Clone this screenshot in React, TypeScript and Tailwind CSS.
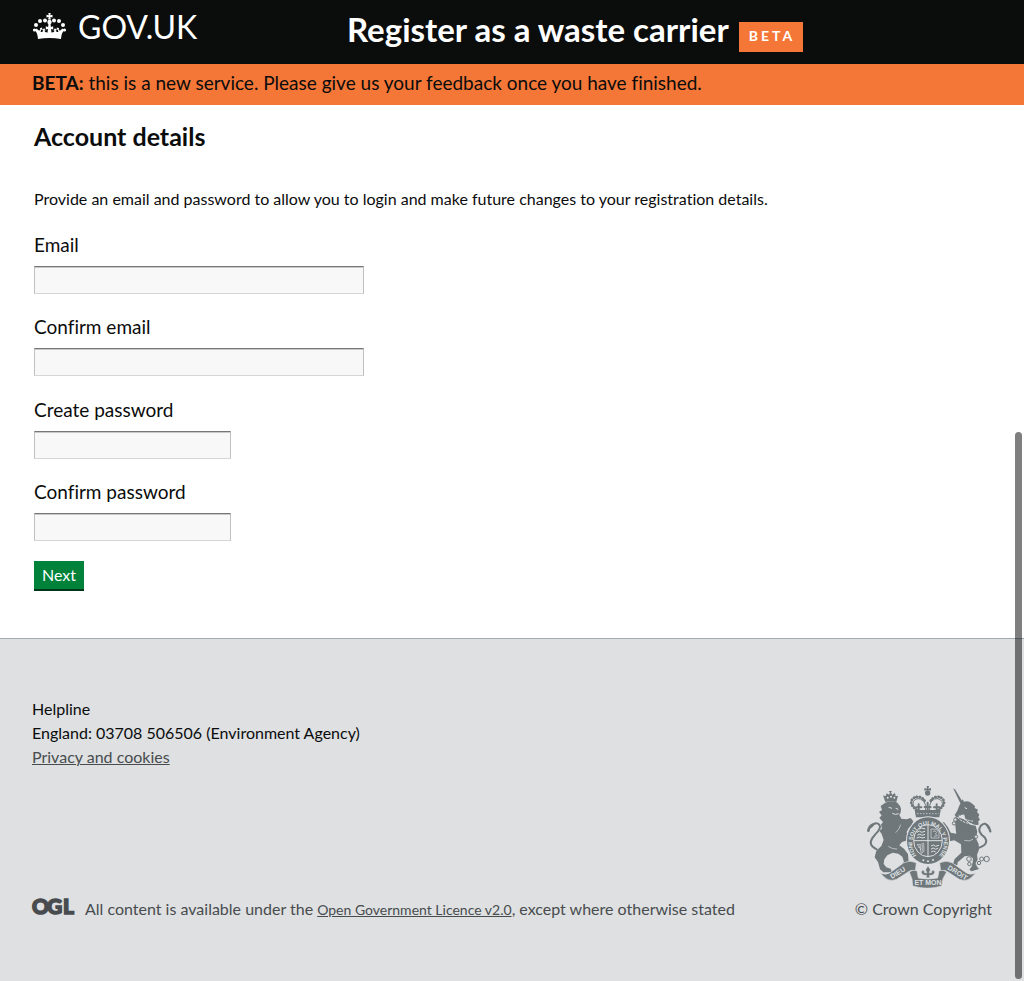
import React from 'react';

function Crown() {
  const pearls = [
    [4, 12, 2], [2.5, 17, 1.6], [8, 8, 2], [13, 7.5, 2],
    [31, 12, 2], [32.5, 17, 1.6], [27, 8, 2], [22, 7.5, 2],
  ];
  return (
    <svg viewBox="0 0 35 26" className="h-[26px] w-[35px] fill-white" aria-hidden="true">
      {pearls.map(([x, y, r]) => (
        <circle key={`${x}-${y}`} cx={x} cy={y} r={r} />
      ))}
      <path d="M16.300 0h2.400l-.5 2.300 2.300-.5v2.600l-2.200-.4.6 2.600h-2.800l.6-2.600-2.200.4V1.800l2.300.5z" />
      <circle cx="17.500" cy="9" r="2.200" />
      <path d="M16.500 10h2l.4 4 2.300-.7v3.200l-2.200-.6.5 3.600c1.800.1 3-.6 3-1.900l-1.200-.2 1.600-2.200 1.900 1.700-1 .6c.3 1.200 1.200 1.700 2.600 1.400l-.6-2.300-1.200.4.3-2.500 2.300.8-.6 1 1.200 1.500 2.700-2.200 1.800 1.300c-2 2-2.900 4.600-3.300 9.100-7.300-1.300-15.700-1.300-23 0C5.600 21.500 4.700 18.900 2.700 16.900l1.800-1.300 2.700 2.200 1.200-1.500-.6-1 2.300-.8.3 2.500-1.200-.4-.6 2.300c1.400.3 2.300-.2 2.600-1.400l-1-.6 1.900-1.700 1.600 2.200-1.200.2c0 1.300 1.200 2 3 1.900l.5-3.600-2.200.6v-3.200l2.300.7z" />
    </svg>
  );
}

function OglMark() {
  return (
    <svg viewBox="0 0 43 26" className="h-[26px] w-[43px] shrink-0 overflow-visible" role="img" aria-label="Open Government Licence">
      <g className="fill-[#484c4e] stroke-[#484c4e] font-['Lato'] text-[21px] font-black" strokeWidth="1.500">
        <text x="0" y="19">O</text>
        <text x="15" y="19">G</text>
        <text x="31" y="19">L</text>
      </g>
    </svg>
  );
}

function Crest() {
  return (
    <svg viewBox="21 18 375 306" className="h-[102px] w-[125px]" role="img" aria-label="Royal coat of arms">
      <defs>
        <path id="garter" d="M170 226A47 54 0 1 1 238 226" />
      </defs>
      <g className="fill-[#6f777b]">
        {/* lion's crown */}
        <path d="M76 66l-7-20 8 3 3-9 7 4 3-6-4-5h10l-3 5 4 6 8-5 2 10 7-2-5 19q-17-5-33 0z" />
        <g className="fill-[#dee0e2]">
          <circle cx="83" cy="53" r="3" /><circle cx="93" cy="50" r="3" /><circle cx="103" cy="53" r="3" />
        </g>
        {/* lion */}
        <path d="M76 68Q95 60 112 68L120 78Q126 88 122 98L118 104 124 116 140 118 152 114 160 124 154 138 146 144 140 156 144 170 138 182 126 186 118 196 132 206 144 222 146 248 156 254 154 261H130L124 254 132 246 127 230 115 221 98 218 82 226 73 238 71 252 79 262 92 266 96 277H70L60 268 54 246 44 232 49 212 64 198 71 180 65 162 58 152 66 146 63 134 69 126 58 114 65 106 57 96 66 90 62 78z" />
        {/* unicorn */}
        <path d="M279 24l7 5 22 37-7 4z" />
        <path d="M303 67l5-9 4 7q14-4 23 5l10 8-1 6 10 5-3 7 7 8-3 7 5 8-5 5 1 10-8 1q-18-3-32-18l-3-13q-8-2-14 4l-9 5-6-8 8-13q5-14 11-25z" />
        <path d="M284 112q30 1 47 22l16 3 5 18-4 20 8 18 1 16-6 15 2 15-8 14 12 14-22 7-7-5 9-12 2-22-11-8-14 2-21 18-1 9-13-4 5-15 20-19-1-25-20-12-14 3-11-12-11-5-14 4-7-12 11-8 8 7 12 1-7-18-9-3 1-8 10-3 12 15 8 16 17 3-2-14z" />
        {/* royal crown */}
        <circle cx="203" cy="39" r="8" />
        <path d="M200 18h7l-2 8 8-2v8l-8-2 2 8h-8l2-8-8 2v-8l8 2z" />
        <path d="M164 90h78l-4 22H168z" />
      </g>
      {/* tails */}
      <g className="fill-none stroke-[#6f777b]" strokeLinecap="round">
        <path d="M50 208Q24 196 36 176Q44 164 54 154Q66 138 54 131Q42 127 34 140" strokeWidth="6" />
        <path d="M25 152Q28 138 38 134" strokeWidth="8" />
        <path d="M351 205Q390 194 374 172Q350 154 362 138Q376 122 386 144" strokeWidth="6" />
        <path d="M382 136Q389 142 391 154" strokeWidth="7" />
      </g>
      <g className="fill-none stroke-[#6f777b]" strokeLinecap="round">
        <path d="M170 90Q149 74 155 61Q164 46 182 52Q193 56 197 70M236 90Q257 74 251 61Q242 46 224 52Q213 56 209 70" strokeWidth="8" strokeDasharray="1 8" />
        <path d="M174 92Q155 77 160 65Q167 53 181 57Q194 61 197 76V94M232 92Q252 77 246 65Q239 53 224 57Q212 61 209 76V94" strokeWidth="3" />
        <path d="M176 73v18M168 82h16M203 68v24M194 81h18M230 73v18M222 82h16" strokeWidth="6" />
      </g>
      <path d="M171 101h65" className="stroke-[#dee0e2]" strokeWidth="2" strokeDasharray="5 4" />
      {/* collar, faces and muscle lines */}
      <g className="fill-none stroke-[#dee0e2]" strokeWidth="3">
        <path d="M293 113Q309 129 338 132M296 106Q315 121 342 124" strokeDasharray="7 3" />
        <path d="M86 82l10 3M107 85l8 3M97 100q9 6 19 1M314 83l7 3" />
        <path d="M85 199q12 9 26 8M122 134q-4 15-15 24M313 181q15 5 26-3" strokeWidth="2" />
      </g>
      {/* garter and shield */}
      <ellipse cx="204" cy="182" rx="66" ry="73" className="fill-[#dee0e2]" />
      <ellipse cx="204" cy="182" rx="63" ry="70" className="fill-[#6f777b]" />
      <text className="fill-[#dee0e2] font-['Liberation_Sans'] text-[17px] font-bold">
        <textPath href="#garter">HONI SOIT QUI MAL Y PENSE</textPath>
      </text>
      <ellipse cx="204" cy="182" rx="43" ry="48" className="fill-[#6f777b] stroke-[#dee0e2]" strokeWidth="3" />
      <g className="fill-none stroke-[#dee0e2]" strokeWidth="3">
        <path d="M204 135v94M162 182h84" />
        <path d="M171 157l7-4 7 4 10-3M172 166l8-4 6 4 9-3M177 147l8-3 11 3M170 174l9-3 7 3 9-2" />
        <path d="M213 198l7-3 7 4 10-3M213 207l7-3 7 4 7-3M213 216l7-3 7 3" />
        <path d="M213 147l16 1 8 10v16h-24zM219 154l7-1 4 5-4 4 6 5-10 2" strokeWidth="2" />
        <path d="M171 193q10 2 20-3l1 24-8 6q-1-18-13-27M177 196v8M182 195v15M187 194v21" strokeWidth="2" />
      </g>
      <g className="fill-[#dee0e2]">
        <circle cx="190" cy="241" r="3" /><circle cx="204" cy="244" r="3" /><circle cx="219" cy="240" r="3" />
      </g>
      {/* chain */}
      <g className="fill-none stroke-[#6f777b]" strokeWidth="3">
        <circle cx="327" cy="237" r="7" /><circle cx="328" cy="252" r="5" /><circle cx="342" cy="256" r="6" />
        <circle cx="357" cy="249" r="5" /><circle cx="365" cy="237" r="6" /><circle cx="380" cy="237" r="8" />
      </g>
      <g className="fill-[#dee0e2] stroke-[#6f777b]" strokeWidth="3">
        <circle cx="286" cy="119" r="5" /><circle cx="282" cy="130" r="5" /><circle cx="348" cy="170" r="5" />
      </g>
      {/* ribbon */}
      <g className="fill-[#6f777b] stroke-[#dee0e2]" strokeWidth="2">
        <path d="M61 278q16 9 29 0l42-30q17-9 37 0l-3 26q-12-7-22 2l-34 22q-27 12-49-20z" />
        <path d="M347 278q-16 9-29 0l-42-30q-17-9-37 0l3 26q12-7 22 2l34 22q27 12 49-20z" />
        <path d="M148 276q8-8 23-4l4 22q29 6 58 0l4-22q15-4 23 4l-11 20-4 22q-42 13-87 0l-2-21z" />
      </g>
      <g className="fill-[#dee0e2] font-['Liberation_Sans'] text-[21px] font-bold" textAnchor="middle">
        <text transform="translate(117 284) rotate(-32)">DIEU</text>
        <text x="204" y="316">ET MON</text>
        <text transform="translate(289 284) rotate(32)">DROIT</text>
      </g>
      <path d="M204 258l7 11-4 9 7 1q0-9 7-8 7 7-3 14l-10 1 1 7h-10l1-7-10-1q-10-7-3-14 7-1 7 8l7-1-4-9z" className="fill-[#6f777b] stroke-[#dee0e2]" strokeWidth="1" />
    </svg>
  );
}

type FieldProps = { id: string; label: string; type: string; width: string };

function Field({ id, label, type, width }: FieldProps) {
  return (
    <div className="flex flex-col gap-[9px]">
      <label htmlFor={id} className="text-[19px] leading-6">{label}</label>
      <input
        id={id}
        type={type}
        className={`${width} h-7 max-w-full border border-[#c0c0c0] border-t-[#777] border-b-[#d5d5d5] bg-[#f8f8f8] px-1 text-base shadow-[inset_0_1px_0_#c8c8c8]`}
      />
    </div>
  );
}

export default function App() {
  return (
    <div className="flex min-h-screen flex-col bg-white font-['Lato',sans-serif] text-base text-[#0b0c0c] [font-variant-ligatures:no-common-ligatures]">
      <header className="grid h-16 grid-cols-[315px_1fr] bg-[#0b0c0c] px-8 text-white">
        <a href="#home" className="flex items-start gap-[11px] pt-[13px] text-[32px] leading-7">
          <Crown />
          <span>GOV.UK</span>
        </a>
        <div className="flex items-start gap-[10px]">
          <h1 className="pt-[9px] text-[33px] font-bold leading-10">Register as a waste carrier</h1>
          <strong className="mt-[22px] h-[30px] bg-[#f47738] pl-[10px] pr-2 text-sm font-bold leading-7 tracking-[3px]">BETA</strong>
        </div>
      </header>
      <p className="h-[41px] bg-[#f47738] px-8 text-[19px] leading-[38px]">
        <strong>BETA:</strong> this is a new service. Please give us your feedback once you have finished.
      </p>

      <main className="px-[34px] pb-[47px] pt-[15px]">
        <h2 className="text-[25px] font-bold leading-8">Account details</h2>
        <p className="mt-[35px] leading-6">
          Provide an email and password to allow you to login and make future changes to your registration details.
        </p>
        <form className="mt-[22px] flex flex-col items-start" onSubmit={(e) => e.preventDefault()}>
          <div className="flex flex-col gap-[21px]">
            <Field id="email" label="Email" type="email" width="w-[330px]" />
            <Field id="confirm-email" label="Confirm email" type="email" width="w-[330px]" />
          </div>
          <div className="mt-[22px] flex flex-col gap-[21px]">
            <Field id="password" label="Create password" type="password" width="w-[197px]" />
            <Field id="confirm-password" label="Confirm password" type="password" width="w-[197px]" />
          </div>
          <button type="submit" className="mt-5 h-[30px] border-b-2 border-[#003618] bg-[#00823b] px-2 text-white">Next</button>
        </form>
      </main>

      <footer className="flex grow flex-col border-t border-[#a1acb2] bg-[#dee0e2] px-8 pt-[58px]">
        <div className="leading-6">
          <p>Helpline</p>
          <p>England: 03708 506506 (Environment Agency)</p>
          <a href="#privacy" className="text-[#484c4e] underline">Privacy and cookies</a>
        </div>
        <div className="mt-[17px] flex items-end justify-between pb-[60px] text-[#484c4e]">
          <div className="flex items-end gap-[10px]">
            <OglMark />
            <p className="leading-6">
              All content is available under the <a href="#licence" className="text-sm underline">Open Government Licence v2.0</a>, except where otherwise stated
            </p>
          </div>
          <div className="flex flex-col items-end gap-[9px]">
            <Crest />
            <p className="leading-6">© Crown Copyright</p>
          </div>
        </div>
      </footer>
      <div className="fixed bottom-0.5 right-0.5 top-[432px] w-[7px] rounded-full bg-black/50" aria-hidden="true" />
    </div>
  );
}
